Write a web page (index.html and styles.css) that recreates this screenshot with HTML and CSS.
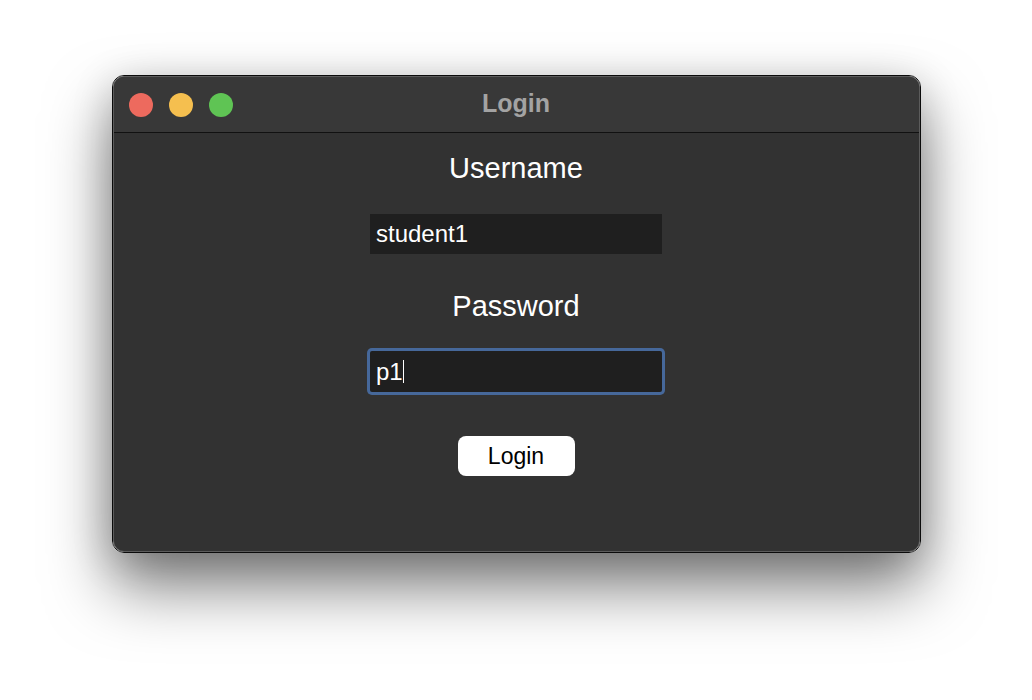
FILE: index.html
```html
<!DOCTYPE html>
<html lang="en">
<head>
<meta charset="utf-8">
<title>Login</title>
<link rel="stylesheet" href="styles.css">
</head>
<body>
<div class="window">
  <div class="frame">
    <div class="titlebar">
      <div class="lights">
        <span class="light red"></span>
        <span class="light yellow"></span>
        <span class="light green"></span>
      </div>
      <div class="title">Login</div>
      <div></div>
    </div>
    <div class="content">
      <div class="label label-user">Username</div>
      <div class="field">student1</div>
      <div class="label label-pass">Password</div>
      <div class="field focused">p1<span class="caret"></span></div>
      <div class="button">Login</div>
    </div>
  </div>
</div>
</body>
</html>
```
FILE: styles.css
```css
html {
  background: #ffffff;
}

body {
  box-sizing: border-box;
  margin: 0;
  padding: 75px 0 0;
  height: 700px;
  background: #ffffff;
  font-family: "Liberation Sans", Arial, sans-serif;
  overflow: hidden;
}

.window {
  box-sizing: border-box;
  width: 809px;
  height: 478px;
  margin: 0 auto;
  border: 1px solid #0b0b0b;
  border-radius: 12px;
  box-shadow: 0 34px 64px rgba(0, 0, 0, 0.5), 0 8px 40px rgba(0, 0, 0, 0.18);
}

.frame {
  box-sizing: border-box;
  height: 100%;
  border: 1px solid #5c5c5c;
  border-radius: 11px;
  overflow: hidden;
  background: #323232;
  display: flex;
  flex-direction: column;
}

.titlebar {
  height: 55px;
  background: #383838;
  border-bottom: 1px solid #111111;
  display: grid;
  grid-template-columns: 1fr auto 1fr;
  align-items: center;
}

.lights {
  display: flex;
  gap: 16px;
  padding-left: 15px;
  padding-top: 1px;
}

.light {
  width: 24px;
  height: 24px;
  border-radius: 50%;
}

.red { background: #ed6a5e; }
.yellow { background: #f5bf4f; }
.green { background: #5fc454; }

.title {
  color: #a3a3a3;
  font-weight: bold;
  font-size: 25px;
  line-height: 30px;
  padding-bottom: 3px;
}

.content {
  display: flex;
  flex-direction: column;
  align-items: center;
  padding-top: 18px;
}

.label {
  color: #ffffff;
  font-size: 29px;
  line-height: 34px;
}

.label-pass {
  margin-top: 35px;
}

.field {
  box-sizing: border-box;
  width: 292px;
  height: 40px;
  margin-top: 29px;
  padding-left: 6px;
  background: #1f1f1f;
  color: #ffffff;
  font-size: 24px;
  line-height: 40px;
  display: flex;
  align-items: center;
}

.field.focused {
  margin-top: 28px;
  height: 41px;
  border-radius: 2px;
  box-shadow: 0 0 0 3px #46689a;
}

.caret {
  display: inline-block;
  width: 1px;
  height: 23px;
  margin-left: 0;
  background: #ffffff;
}

.button {
  margin-top: 44px;
  width: 117px;
  height: 40px;
  border-radius: 8px;
  background: #ffffff;
  color: #000000;
  font-size: 23px;
  line-height: 40px;
  text-align: center;
}
```
